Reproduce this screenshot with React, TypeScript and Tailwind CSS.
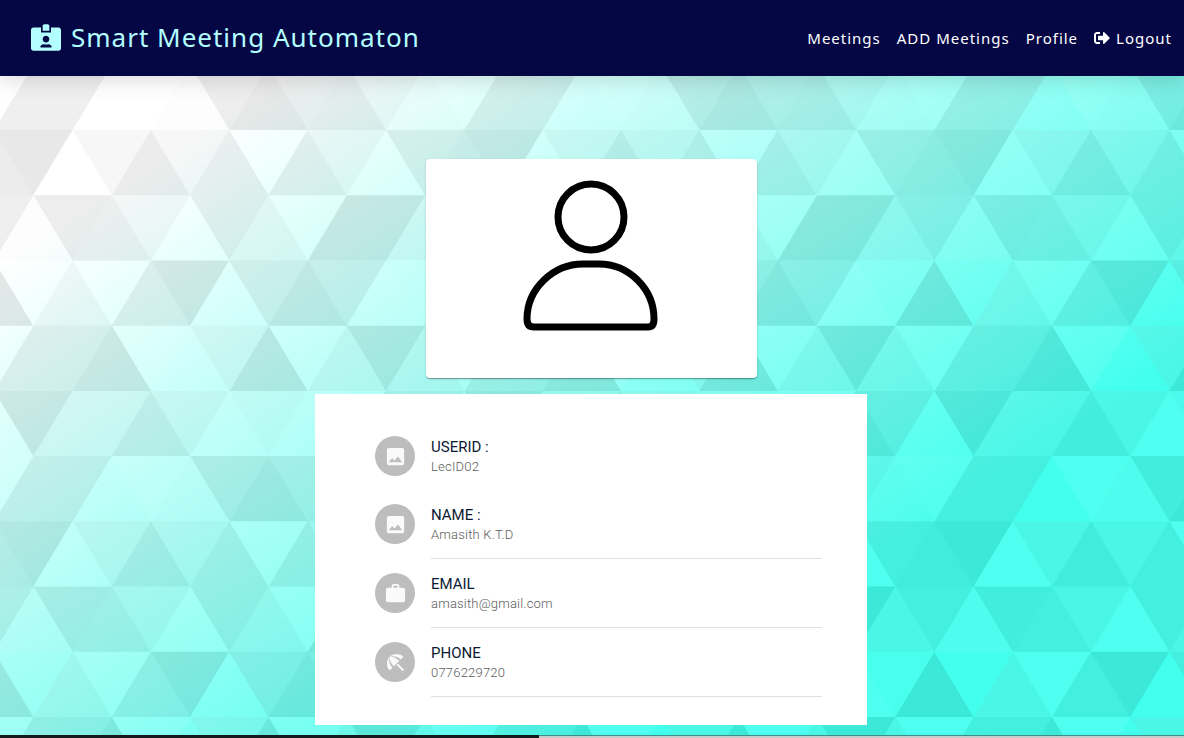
import type { ReactNode } from "react";
import { FaIdCardAlt, FaSignOutAlt } from "react-icons/fa";
import { MdImage, MdWork } from "react-icons/md";

const CELL_W = 78.35;
const CELL_H = 65.22;
const ORIGIN_Y = 130;

// Brightness of the repeating mosaic tile, one row per band.
// Entries alternate: upward triangle, downward triangle.
const TILE: number[][] = [
  [3, 2, 0.5, 2, 1, 3, 1, 2, 3, 1, 0.5, 0],
  [2.7, 0.7, 1, 2, 3, 1, 2, 3, 0, 0, 2, 1],
  [2, 3, 1, 0, 4, 1, 0, 1, 3, 3.5, 0, 4],
  [1, 1, 0, 3, 4, 2, 0, 3, 2, 0, 2, 3],
  [2, 2, 0.7, 2, 3, 2.5, 3, 3, 0, 1, 3.5, 0],
  [1, 1, 4, 3, 2.7, 0.7, 0, 1, 0.7, 2, 2.7, 3],
];

// Grey value and opacity of the overlay at each brightness step.
const STEPS: [number, number][] = [
  [0, 0.09],
  [90, 0.095],
  [165, 0.085],
  [255, 0.07],
  [255, 0],
];

function shade(level: number): string {
  const i = Math.min(Math.floor(level), 3);
  const f = level - i;
  const [g0, a0] = STEPS[i];
  const [g1, a1] = STEPS[i + 1];
  const g = Math.round(g0 + (g1 - g0) * f);
  return `rgba(${g},${g},${g},${(a0 + (a1 - a0) * f).toFixed(3)})`;
}

function buildTriangles() {
  const list: { points: string; fill: string }[] = [];
  for (let row = -2; row <= 9; row++) {
    const y0 = ORIGIN_Y + row * CELL_H;
    const y1 = y0 + CELL_H;
    const tileRow = TILE[((row % 6) + 6) % 6];
    const startX = row % 2 === 0 ? 72.5 : 33.5;
    for (let col = -2; col < 16; col++) {
      const x = startX + col * CELL_W;
      const k = ((col % 6) + 6) % 6;
      const half = CELL_W / 2;
      list.push({
        points: `${x},${y0} ${x + half},${y1} ${x - half},${y1}`,
        fill: shade(tileRow[k * 2]),
      });
      list.push({
        points: `${x},${y0} ${x + CELL_W},${y0} ${x + half},${y1}`,
        fill: shade(tileRow[k * 2 + 1]),
      });
    }
  }
  return list;
}

const TRIANGLES = buildTriangles();

function Mosaic() {
  return (
    <svg
      className="absolute inset-0 -z-10 h-full w-full"
      viewBox="0 0 1184 738"
      preserveAspectRatio="xMidYMin slice"
      aria-hidden="true"
    >
      <defs>
        <linearGradient id="aqua" gradientUnits="userSpaceOnUse" x1="154" y1="164" x2="548" y2="772">
          <stop offset="0" stopColor="#ffffff" />
          <stop offset="1" stopColor="#42ffee" />
        </linearGradient>
      </defs>
      <rect width="1184" height="738" fill="url(#aqua)" />
      {TRIANGLES.map((t, i) => (
        <polygon key={i} points={t.points} fill={t.fill} />
      ))}
    </svg>
  );
}

function BeachIcon() {
  return (
    <svg viewBox="0 0 24 24" width="1em" height="1em" fill="currentColor" aria-hidden="true">
      <path d="M13.127 14.56l1.43-1.43 6.44 6.443L19.57 21zm4.293-5.73l2.86-2.86c-3.95-3.95-10.35-3.96-14.3-.02 3.93-1.3 8.31-.25 11.44 2.88zM5.95 5.98c-3.94 3.95-3.93 10.35.02 14.3l2.86-2.86C5.7 14.29 4.65 9.91 5.95 5.98zm.02-.02l-.01.01c-.38 3.01 1.17 6.88 4.3 10.02l5.73-5.73c-3.13-3.13-7.01-4.68-10.02-4.3z" />
    </svg>
  );
}

function Header() {
  return (
    <header className="relative flex h-19 items-center justify-between bg-[#050745] pr-3 pl-[31px] font-['Noto_Sans',sans-serif] tracking-[1px] shadow-[0_4px_20px_rgba(0,0,0,0.14)]">
      <a href="#" className="flex items-center gap-2.5 pb-0.5 text-[26px] text-[#b3ffff]">
        <FaIdCardAlt className="h-[27px] w-[30px]" />
        Smart Meeting Automaton
      </a>
      <nav className="flex items-center gap-4 text-[15px] text-white">
        <a href="#meetings">Meetings</a>
        <a href="#add">ADD Meetings</a>
        <a href="#profile">Profile</a>
        <a href="#logout" className="flex items-center gap-1.5">
          <FaSignOutAlt className="size-4" />
          Logout
        </a>
      </nav>
    </header>
  );
}

type RowProps = { icon: ReactNode; label: string; value: string; divider?: boolean };

function ProfileRow({ icon, label, value, divider }: RowProps) {
  return (
    <li className="flex gap-4">
      <span className="mt-3.5 flex size-10 shrink-0 items-center justify-center rounded-full bg-[#bdbdbd] text-[23px] text-[#fafafa]">
        {icon}
      </span>
      <div
        className={
          divider ? "grow border-b border-[#e0e0e0] pt-[15px] pb-[13px]" : "grow pt-[15px] pb-[13px]"
        }
      >
        <p className="text-[15px] leading-5 text-[#0b1a33]">{label}</p>
        <p className="text-[13px] leading-5 font-light tracking-[0.2px] text-[#5c5c5c]">{value}</p>
      </div>
    </li>
  );
}

export default function App() {
  return (
    <div className="relative isolate flex min-h-screen flex-col overflow-hidden">
      <Mosaic />
      <Header />
      <main className="flex grow flex-col items-center gap-4 pt-[83px] pr-[18px] pb-2.5 pl-4 font-[Roboto,sans-serif]">
        <section className="flex w-full max-w-[331px] justify-center rounded bg-white pt-[21px] pb-[47px] shadow-[0_2px_1px_-1px_rgba(0,0,0,0.2),0_1px_1px_rgba(0,0,0,0.14),0_1px_3px_rgba(0,0,0,0.12)]">
          <svg
            className="h-[151px] w-[136px]"
            viewBox="0 0 136 151"
            fill="none"
            stroke="#000000"
            strokeWidth="7"
            role="img"
            aria-label="Profile picture"
          >
            <circle cx="68" cy="37" r="33" />
            <path d="M60 84h16c30 0 55 25 55 55q0 8-6 8H11q-7 0-7-8c0-30 26-55 56-55z" />
          </svg>
        </section>
        <section className="w-full max-w-[552px] bg-white py-7 pr-[45px] pl-15">
          <ul>
            <ProfileRow icon={<MdImage />} label="USERID :" value="LecID02" />
            <ProfileRow icon={<MdImage />} label="NAME :" value="Amasith K.T.D" divider />
            <ProfileRow icon={<MdWork />} label="EMAIL" value="amasith@gmail.com" divider />
            <ProfileRow icon={<BeachIcon />} label="PHONE" value="0776229720" divider />
          </ul>
        </section>
      </main>
      <footer className="flex h-[3px]">
        <div className="w-[539px] bg-[#14191c]" />
        <div className="grow border-t border-[#3f8f88] bg-[#c8cccb]" />
      </footer>
    </div>
  );
}
